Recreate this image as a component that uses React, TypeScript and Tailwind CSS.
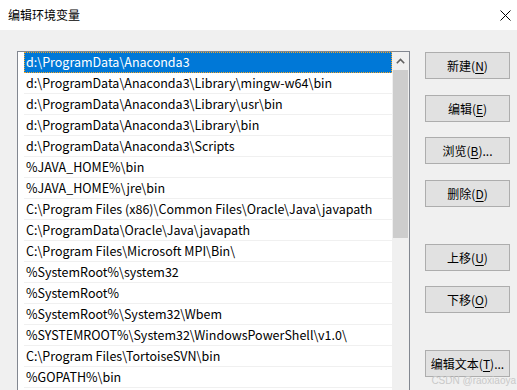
import React from "react";

const paths = [
  "d:\\ProgramData\\Anaconda3",
  "d:\\ProgramData\\Anaconda3\\Library\\mingw-w64\\bin",
  "d:\\ProgramData\\Anaconda3\\Library\\usr\\bin",
  "d:\\ProgramData\\Anaconda3\\Library\\bin",
  "d:\\ProgramData\\Anaconda3\\Scripts",
  "%JAVA_HOME%\\bin",
  "%JAVA_HOME%\\jre\\bin",
  "C:\\Program Files (x86)\\Common Files\\Oracle\\Java\\javapath",
  "C:\\ProgramData\\Oracle\\Java\\javapath",
  "C:\\Program Files\\Microsoft MPI\\Bin\\",
  "%SystemRoot%\\system32",
  "%SystemRoot%",
  "%SystemRoot%\\System32\\Wbem",
  "%SYSTEMROOT%\\System32\\WindowsPowerShell\\v1.0\\",
  "C:\\Program Files\\TortoiseSVN\\bin",
  "%GOPATH%\\bin",
];

// label before the mnemonic, mnemonic letter, trailing text
const buttons: { label: string; key: string; tail?: string; mt: string }[] = [
  { label: "新建", key: "N", mt: "mt-px" },
  { label: "编辑", key: "E", mt: "mt-[16px]" },
  { label: "浏览", key: "B", tail: "...", mt: "mt-[15px]" },
  { label: "删除", key: "D", mt: "mt-[16px]" },
  { label: "上移", key: "U", mt: "mt-[37px]" },
  { label: "下移", key: "O", mt: "mt-[15px]" },
  { label: "编辑文本", key: "T", tail: "...", mt: "mt-[37px]" },
];

const font = "font-['Noto_Sans_CJK_SC','Noto_Sans',sans-serif]";

export default function App() {
  return (
    <div className={`relative h-[390px] w-[517px] overflow-hidden bg-[#f0f0f0] ${font} text-black`}>
      {/* Title bar */}
      <div className="flex h-[30px] items-center justify-between bg-white pl-[8px] pr-[5px]">
        <span className="text-[12px]">编辑环境变量</span>
        <svg width="11" height="11" viewBox="0 0 11 11" className="mr-[1px]">
          <path d="M0.5 0.5l10 10M10.5 0.5l-10 10" stroke="#000" strokeWidth="1" />
        </svg>
      </div>

      <div className="flex pl-[17px] pt-[21px]">
        {/* Path list */}
        <div className="flex h-[400px] w-[393px] border border-[#828790] bg-white">
          <div className="flex w-[374px] flex-col pl-[6px]">
            {paths.map((p, i) => (
              <div
                key={p}
                className={
                  i === 0
                    ? "flex h-[21px] items-center border border-dotted border-[#f5a623] bg-[#0078d7] pl-[1px] text-[12.5px] text-white"
                    : "flex h-[21px] items-center border-b border-[#f0f0f0] pl-[2px] text-[12.5px] whitespace-nowrap"
                }
              >
                {p}
              </div>
            ))}
          </div>
          {/* Scrollbar */}
          <div className="flex w-[17px] flex-col bg-[#f0f0f0]">
            <div className="flex h-[18px] items-center justify-center">
              <svg width="9" height="6" viewBox="0 0 9 6">
                <path d="M0.8 5.2L4.5 1.5l3.7 3.7" fill="none" stroke="#606060" strokeWidth="1.6" />
              </svg>
            </div>
            <div className="mx-px h-[168px] bg-[#cdcdcd]" />
          </div>
        </div>

        {/* Buttons */}
        <div className="ml-[15px] flex flex-col">
          {buttons.map((b) => (
            <button
              key={b.label}
              className={`${b.mt} flex h-[27px] w-[85px] items-center justify-center border border-[#adadad] bg-[#e1e1e1] text-[12px] leading-none`}
            >
              {b.label}(<span className="underline underline-offset-2">{b.key}</span>){b.tail}
            </button>
          ))}
        </div>
      </div>

      {/* Watermark */}
      <div className="absolute bottom-[4px] right-[1px] font-['Liberation_Sans',sans-serif] text-[10px] leading-none text-[#c9c9c9]">
        CSDN @raoxiaoya
      </div>
    </div>
  );
}
